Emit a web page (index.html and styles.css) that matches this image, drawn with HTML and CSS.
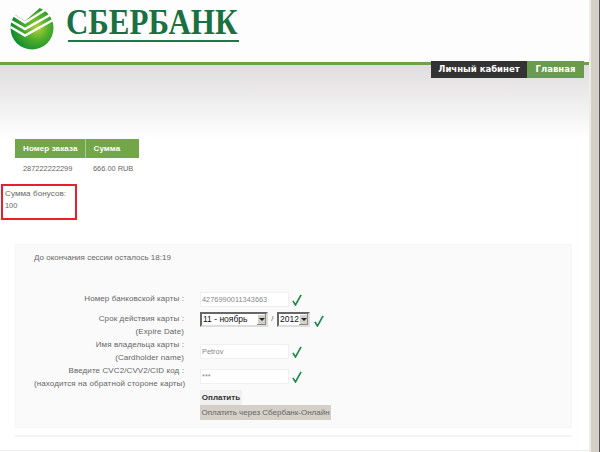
FILE: index.html
```html
<!DOCTYPE html>
<html>
<head>
  <meta charset="utf-8">
  <title>Сбербанк</title>
  <link rel="stylesheet" href="styles.css">
</head>
<body>

  <div id="page">

    <header class="top">
      <svg class="logo-mark" width="46" height="44" viewBox="0 0 46 44">
        <defs>
          <radialGradient id="ball" cx="0.62" cy="0.5" r="0.62">
            <stop offset="0" stop-color="#b5cf3a"/>
            <stop offset="0.45" stop-color="#4fae2c"/>
            <stop offset="1" stop-color="#0d8a2e"/>
          </radialGradient>
        </defs>
        <circle cx="22" cy="22" r="21.5" fill="url(#ball)"/>
        <path d="M0 0H32L15 15L4 8L0 14Z" fill="#fdfdfd"/>
        <path d="M3 9L15 16.5L35 4M1 15L15 23L40 9M0.5 21L15 29.5L43 14" fill="none" stroke="#fdfdfd" stroke-width="2.4"/>
      </svg>
      <div class="logo-name">
        <div class="logo-text">СБЕРБАНК</div>
      </div>
    </header>

    <div class="band">
      <nav class="tabs">
        <a class="tab tab-dark">Личный кабинет</a>
        <a class="tab tab-green">Главная</a>
      </nav>
    </div>

    <table class="order">
      <tr>
        <th class="col-num">Номер заказа</th>
        <th class="col-sum">Сумма</th>
      </tr>
      <tr>
        <td>287222222299</td>
        <td>666.00 RUB</td>
      </tr>
    </table>

    <div class="bonus">
      <div>Сумма бонусов:</div>
      <div class="bonus-value">100</div>
    </div>

    <div class="panel">
      <p class="session">До окончания сессии осталось 18:19</p>

      <div class="form">
        <label class="label">Номер банковской карты :</label>
        <div class="field field-first">
          <input class="input" type="text" value="4276990011343663">
          <svg class="check" width="10" height="12" viewBox="0 0 11 13"><path d="M1 7.5L3.8 12L10 .8" fill="none" stroke="#1e8a4a" stroke-width="1.8"/></svg>
        </div>

        <label class="label">Срок действия карты :<br>(Expire Date)</label>
        <div class="field field-first">
          <span class="select select-month"><span class="select-val">11 - ноябрь</span><span class="arrow"></span></span>
          <span class="slash">/</span>
          <span class="select select-year"><span class="select-val">2012</span><span class="arrow"></span></span>
          <svg class="check check-date" width="10" height="12" viewBox="0 0 11 13"><path d="M1 7.5L3.8 12L10 .8" fill="none" stroke="#1e8a4a" stroke-width="1.8"/></svg>
        </div>

        <label class="label">Имя владельца карты :<br>(Cardholder name)</label>
        <div class="field field-name">
          <input class="input" type="text" value="Petrov">
          <svg class="check" width="10" height="12" viewBox="0 0 11 13"><path d="M1 7.5L3.8 12L10 .8" fill="none" stroke="#1e8a4a" stroke-width="1.8"/></svg>
        </div>

        <label class="label">Введите CVC2/CVV2/CID код :<br>(находится на обратной стороне карты)</label>
        <div class="field">
          <input class="input" type="text" value="***">
          <svg class="check" width="10" height="12" viewBox="0 0 11 13"><path d="M1 7.5L3.8 12L10 .8" fill="none" stroke="#1e8a4a" stroke-width="1.8"/></svg>
        </div>

        <div></div>
        <div class="buttons">
          <button class="btn btn-pay">Оплатить</button>
          <button class="btn btn-online">Оплатить через Сбербанк-Онлайн</button>
        </div>
      </div>
    </div>

    <div class="rule"></div>
    <div class="bottom-line"></div>

  </div>

  <div class="scrollbar"></div>

</body>
</html>
```

FILE: styles.css
```css
html, body {
  height: 100%;
}

body {
  margin: 0;
  display: flex;
  height: 452px;
  overflow: hidden;
  background: #fff;
  font: 8px/13px "Liberation Sans", sans-serif;
  letter-spacing: .1px;
  color: #666;
}

#page {
  width: 589px;
  flex: none;
}

.scrollbar {
  width: 11px;
  box-sizing: border-box;
  background: #d4d0c8;
  border-left: 2px solid #eeece8;
  border-right: 1px solid #555;
}

.top {
  display: flex;
  height: 62px;
  box-sizing: border-box;
  padding: 6px 0 0 10px;
  background: #fdfdfd;
}

.logo-mark {
  flex: none;
}

.logo-name {
  box-sizing: border-box;
  width: 171px;
  height: 35px;
  margin: 1px 0 0 12px;
  border-bottom: 2px solid #1a7a45;
}

.logo-text {
  margin-left: -2px;
  font: bold 36px/30px "Liberation Serif", serif;
  letter-spacing: 0;
  color: #1a7040;
  white-space: nowrap;
  transform: scaleX(.86);
  transform-origin: left top;
}

.band {
  height: 74px;
  border-top: 3px solid #6fa04c;
  background: linear-gradient(#dfdddd, #fff);
}

.tabs {
  display: flex;
  justify-content: flex-end;
  margin: -4px 5px 0 0;
  font: bold 8.5px/17px "DejaVu Sans", sans-serif;
  letter-spacing: 0;
  color: #fff;
}

.tab {
  display: block;
  height: 17px;
  text-align: center;
}

.tab-dark {
  width: 96px;
  background: #333;
}

.tab-green {
  width: 57px;
  background: #6a9a4b;
}

.order {
  width: 124px;
  margin: 0 0 0 15px;
  border-collapse: collapse;
  table-layout: fixed;
  white-space: nowrap;
}

.order th {
  box-sizing: border-box;
  height: 19px;
  padding: 0 0 0 8px;
  background: #73a549;
  border-right: 1px solid #a9c98f;
  font: bold 8px/13px "Liberation Sans", sans-serif;
  letter-spacing: .1px;
  color: #fff;
  text-align: left;
}

.order th:last-child {
  border-right: 0;
}

.order td {
  height: 21px;
  padding: 0 0 0 8px;
  font-size: 7.4px;
  letter-spacing: 0;
}

.col-num {
  width: 70px;
}

.col-sum {
  width: 54px;
}

.bonus {
  box-sizing: border-box;
  width: 76px;
  height: 36px;
  margin: 5px 0 0 1px;
  padding: 2px;
  border: 2px solid #e8202a;
  line-height: 12px;
  white-space: nowrap;
}

.bonus-value {
  font-size: 7.4px;
  letter-spacing: 0;
}

.panel {
  box-sizing: border-box;
  height: 184px;
  margin: 24px 17px 0 15px;
  padding: 6px 18px 0;
  background: #fafafa;
  border: 1px solid #f5f5f5;
}

.session {
  margin: 0;
  letter-spacing: 0;
}

.form {
  display: grid;
  grid-template-columns: 150px 1fr;
  grid-template-rows: 20px 26px 26px 26px auto;
  column-gap: 16px;
  margin: 28px 0 0 0;
}

.label {
  text-align: right;
  white-space: nowrap;
}

.field {
  display: flex;
  align-items: flex-start;
  padding-top: 5px;
}

.field-first {
  padding-top: 0;
}

.field-name {
  padding-top: 6px;
}

.input {
  box-sizing: border-box;
  width: 89px;
  height: 15px;
  padding: 0 1px;
  background: #fff;
  border: 1px solid #f0f0f0;
  font: 7.4px "Liberation Sans", sans-serif;
  color: #888;
}

.check {
  margin: 2px 0 0 3px;
}

.select {
  display: flex;
  box-sizing: border-box;
  height: 15px;
  background: #fff;
  border: 2px solid;
  border-color: #666 #ddd #ddd #666;
  font: 8.5px/11px "Liberation Sans", sans-serif;
  letter-spacing: 0;
  color: #111;
}

.select-month {
  width: 68px;
}

.select-year {
  width: 33px;
}

.select-val {
  flex: 1;
  min-width: 0;
  padding-left: 1px;
  white-space: nowrap;
}

.arrow {
  position: relative;
  flex: none;
  width: 9px;
  background: #d4d0c8;
  box-shadow: inset -1px -1px 0 #888, inset 1px 1px 0 #fff;
}

.arrow::after {
  content: "";
  position: absolute;
  left: 2px;
  top: 4px;
  border: 3px solid transparent;
  border-top: 3px solid #222;
  border-bottom: 0;
}

.slash {
  width: 9px;
  text-align: center;
}

.check-date {
  margin-left: 4px;
  margin-top: 3px;
}

.buttons {
  display: flex;
  flex-direction: column;
  align-items: flex-start;
}

.btn {
  height: 15px;
  padding: 0 1px;
  border: 0;
  font: 8px/15px "Liberation Sans", sans-serif;
  letter-spacing: 0;
  white-space: nowrap;
}

.btn-pay {
  width: 42px;
  background: #f0f0f0;
  font-weight: bold;
  color: #333;
}

.btn-online {
  width: 131px;
  background: #d4d0c8;
  color: #666;
}

.rule {
  height: 2px;
  margin: 7px 17px 0 15px;
  background: #f3f3f3;
}

.bottom-line {
  height: 1px;
  margin-top: 13px;
  background: #eee;
}
```
